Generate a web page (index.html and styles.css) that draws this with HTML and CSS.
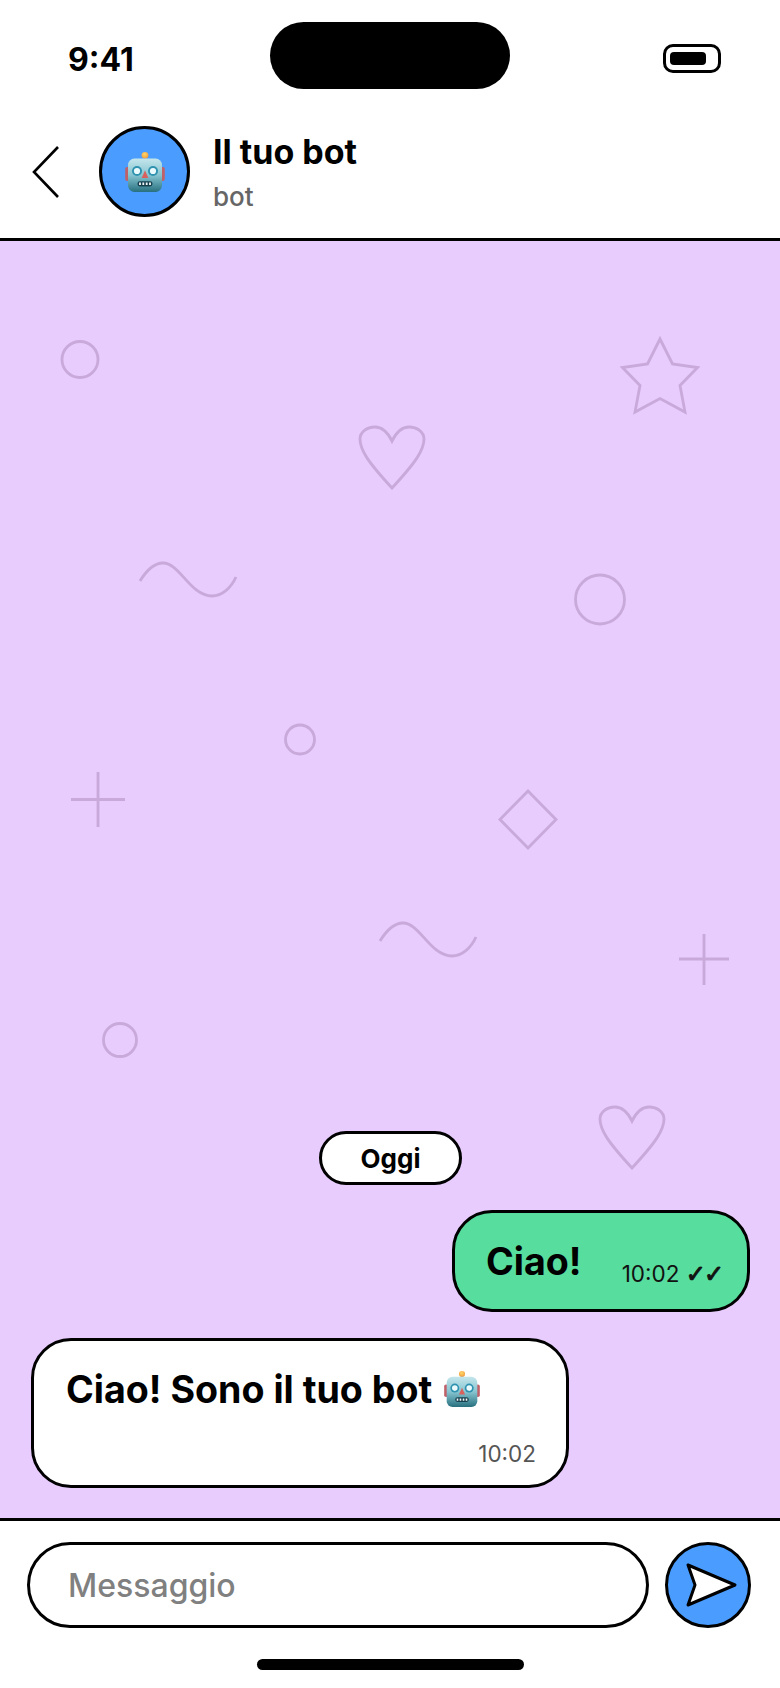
FILE: index.html
```html
<!DOCTYPE html>
<html lang="it">
<head>
<meta charset="utf-8">
<title>Il tuo bot</title>
<link rel="stylesheet" href="styles.css">
</head>
<body>
<svg class="sprites" width="0" height="0" aria-hidden="true">
  <defs>
    <linearGradient id="robot-head" x1="0" y1="0" x2="0" y2="1">
      <stop offset="0" stop-color="#c4e6ec"/>
      <stop offset="0.5" stop-color="#86c4d0"/>
      <stop offset="1" stop-color="#28707f"/>
    </linearGradient>
    <radialGradient id="robot-bulb" cx="0.45" cy="0.35" r="0.7">
      <stop offset="0" stop-color="#ffd76a"/>
      <stop offset="1" stop-color="#f0993a"/>
    </radialGradient>
    <symbol id="robot" viewBox="0 0 40 40">
      <rect x="18.6" y="4" width="2.8" height="4" fill="#8a96a0"/>
      <ellipse cx="20" cy="3.2" rx="3.4" ry="3.2" fill="url(#robot-bulb)"/>
      <rect x="0.2" y="15" width="4.4" height="14" rx="2" fill="#c0616a"/>
      <rect x="35.4" y="15" width="4.4" height="14" rx="2" fill="#c0616a"/>
      <rect x="3" y="6.5" width="34" height="33.5" rx="6.5" fill="url(#robot-head)"/>
      <circle cx="12" cy="19" r="5" fill="#2f93b0"/>
      <circle cx="12" cy="19" r="3.1" fill="#eafafd"/>
      <circle cx="28" cy="19" r="5" fill="#2f93b0"/>
      <circle cx="28" cy="19" r="3.1" fill="#eafafd"/>
      <path d="M20 18.5l3.4 7.5h-6.8z" fill="#d9605c"/>
      <rect x="12.5" y="29.2" width="15" height="5.2" rx="2.4" fill="#17414f"/>
      <path d="M15 30.5v2.6M18.3 30.5v2.6M21.7 30.5v2.6M25 30.5v2.6" stroke="#f2f6f7" stroke-width="1.8"/>
    </symbol>
  </defs>
</svg>

<div class="phone">
  <div class="status-bar">
    <span class="clock">9:41</span>
    <div class="island"></div>
    <div class="battery"><div class="battery-level"></div></div>
  </div>

  <header class="chat-header">
    <svg class="back" viewBox="0 0 28 54" aria-label="Indietro">
      <path d="M26 2 2 27l24 25"/>
    </svg>
    <div class="avatar"><svg class="emoji emoji-avatar" role="img" aria-label="🤖"><use href="#robot"/></svg></div>
    <div class="peer">
      <div class="peer-name">Il tuo bot</div>
      <div class="peer-sub">bot</div>
    </div>
  </header>

  <main class="chat">
    <!-- Wallpaper doodles, in page coordinates -->
    <svg class="doodles" viewBox="0 241 780 1277" aria-hidden="true">
      <circle cx="80" cy="359.5" r="18"/>
      <path d="M660 339l12.500 25 25 3.500-17.500 18 5 26.500-25-13.500-25 13.500 5-26.500-17.500-18 25-3.500z"/>
      <path id="heart" d="M392 488C368 462 360 450 360 439 360 432 367 427 375 427 383 427 388 433 392 441 396 433 401 427 409 427 417 427 424 432 424 439 424 450 416 462 392 488z"/>
      <path id="wave" d="M140 581C148 568 155 563 163 563 180 563 190 596 212 596 222 596 231 588 236 577"/>
      <circle cx="600" cy="599.500" r="24.500"/>
      <circle cx="300" cy="739.500" r="14.500"/>
      <path d="M71 799.500h54M98 772v55"/>
      <path d="M528 791l28 28.500-28 28.500-28-28.500z"/>
      <use href="#wave" x="240" y="360"/>
      <path d="M679 959h50M704 934v51"/>
      <circle cx="120" cy="1040" r="16.500"/>
      <use href="#heart" x="240" y="680"/>
    </svg>

    <div class="day-pill">Oggi</div>

    <div class="bubble bubble-out">
      <span class="bubble-text">Ciao!</span>
      <span class="meta meta-out">10:02 <span class="ticks">✓✓</span></span>
    </div>

    <div class="bubble bubble-in">
      <div class="bubble-text">Ciao! Sono il tuo bot <svg class="emoji emoji-inline" role="img" aria-label="🤖"><use href="#robot"/></svg></div>
      <div class="meta meta-in">10:02</div>
    </div>
  </main>

  <footer class="composer">
    <div class="composer-row">
      <div class="field">Messaggio</div>
      <div class="send">
        <svg viewBox="0 0 86 86" class="send-icon" aria-label="Invia">
          <path d="M23 23 70 43 23 63 30 43z"/>
        </svg>
      </div>
    </div>
    <div class="home-bar"></div>
  </footer>
</div>
</body>
</html>
```

FILE: styles.css
```css
* {
  box-sizing: border-box;
}

html,
body {
  margin: 0;
  padding: 0;
  background: #fff;
}

body {
  font-family: Inter, "Noto Sans", sans-serif;
  color: #000;
}

.sprites {
  display: block;
  height: 0;
  width: 0;
}

.phone {
  width: 780px;
  height: 1688px;
  display: flex;
  flex-direction: column;
  overflow: hidden;
}

/* Status bar */
.status-bar {
  height: 108px;
  flex: none;
  display: grid;
  grid-template-columns: 270px 240px 1fr;
  align-items: start;
}

.clock {
  margin: 40px 0 0 68px;
  font-size: 32px;
  line-height: 40px;
  font-weight: 700;
}

.island {
  margin-top: 22px;
  height: 67px;
  border-radius: 34px;
  background: #000;
}

.battery {
  margin: 44px 0 0 153px;
  width: 58px;
  height: 29px;
  padding: 5px 12px 5px 4px;
  border: 3px solid #000;
  border-radius: 10px;
}

.battery-level {
  height: 100%;
  border-radius: 4px;
  background: #000;
}

/* Conversation header */
.chat-header {
  flex: none;
  height: 133px;
  padding: 18px 0 21px 32px;
  display: flex;
  align-items: center;
  border-bottom: 3px solid #000;
}

.back {
  width: 28px;
  height: 54px;
  flex: none;
  fill: none;
  stroke: #000;
  stroke-width: 2.6;
}

.avatar {
  width: 91px;
  height: 91px;
  margin-left: 39px;
  flex: none;
  display: flex;
  align-items: center;
  justify-content: center;
  border: 3px solid #000;
  border-radius: 50%;
  background: #4a9dff;
}

.emoji {
  display: inline-block;
}

.emoji-avatar {
  width: 40px;
  height: 40px;
}

.peer {
  margin-left: 23px;
}

.peer-name {
  font-size: 34px;
  line-height: 40px;
  font-weight: 700;
}

.peer-sub {
  margin-top: 10px;
  font-size: 26px;
  line-height: 30px;
  font-weight: 500;
  color: #666;
}

/* Message list */
.chat {
  flex: 1;
  position: relative;
  display: flex;
  flex-direction: column;
  justify-content: flex-end;
  padding: 0 31px 30px;
  background: #e7ccfd;
}

.doodles {
  position: absolute;
  top: 0;
  left: 0;
  width: 100%;
  height: 100%;
  fill: none;
  stroke: #c8a9da;
  stroke-width: 2.8;
}

.day-pill {
  position: relative;
  align-self: center;
  width: 143px;
  height: 54px;
  margin-right: -1px;
  display: flex;
  align-items: center;
  justify-content: center;
  border: 3px solid #000;
  border-radius: 27px;
  background: #fff;
  font-size: 26px;
  font-weight: 700;
}

.bubble {
  position: relative;
  border: 3px solid #000;
  border-radius: 40px;
}

.bubble-text {
  font-size: 37.6px;
  line-height: 46px;
  font-weight: 700;
}

.bubble-out {
  align-self: flex-end;
  width: 298px;
  height: 102px;
  margin: 25px 0 0;
  margin-right: -1px;
  padding: 26px 25px 0 31px;
  display: flex;
  justify-content: space-between;
  background: #57dd9d;
}

.bubble-in {
  align-self: flex-start;
  width: 538px;
  height: 150px;
  margin-top: 26px;
  padding: 26px 30px 0 32px;
  background: #fff;
}

.meta {
  font-size: 22.5px;
  line-height: 28px;
}

.meta-out {
  margin-top: 21px;
  color: #111;
}

.ticks {
  font-family: "DejaVu Sans", sans-serif;
  font-weight: 700;
  font-size: 24px;
  letter-spacing: -2px;
  -webkit-text-stroke: 1px #111;
}

.meta-in {
  margin-top: 27px;
  text-align: right;
  color: #555;
}

.emoji-inline {
  width: 36px;
  height: 36px;
  margin-left: 3px;
  vertical-align: -4px;
}

/* Composer */
.composer {
  flex: none;
  height: 170px;
  border-top: 3px solid #000;
  background: #fff;
}

.composer-row {
  height: 86px;
  margin: 21px 29px 0 27px;
  display: flex;
  gap: 16px;
}

.field {
  flex: 1;
  display: flex;
  align-items: center;
  padding-left: 38px;
  border: 3px solid #000;
  border-radius: 43px;
  font-size: 32px;
  font-weight: 500;
  color: #808080;
}

.send {
  flex: none;
  width: 86px;
  height: 86px;
  border: 3px solid #000;
  border-radius: 50%;
  background: #4a9dff;
}

.send-icon {
  display: block;
  width: 86px;
  height: 86px;
  margin: -3px;
  fill: #fff;
  stroke: #000;
  stroke-width: 3;
  stroke-linejoin: round;
}

.home-bar {
  width: 267px;
  height: 11px;
  margin: 31px auto 0;
  border-radius: 6px;
  background: #000;
}
```
